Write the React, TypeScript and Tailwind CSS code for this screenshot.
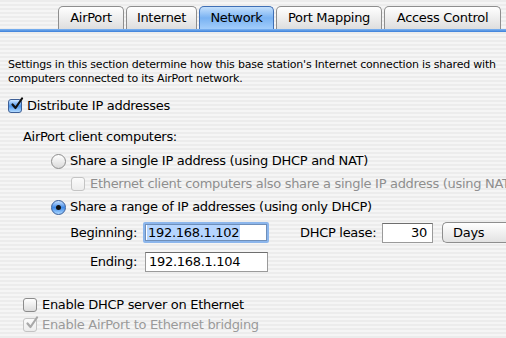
import React from "react";

type TabProps = { label: string; width: string; selected?: boolean };

const Tab = ({ label, width, selected }: TabProps) => (
  <div
    className={
      "h-[23px] flex items-center justify-center rounded-t-[5px] border border-b-0 text-[13px] tracking-[-0.3px] " +
      width +
      (selected
        ? " border-[#3f6fb5] bg-gradient-to-b from-[#c4e0fc] via-[#79b2f2] to-[#a2cdfb]"
        : " border-[#8e8e8e] bg-gradient-to-b from-[#ffffff] to-[#dedede]")
    }
  >
    {label}
  </div>
);

const CheckMark = ({ color }: { color: string }) => (
  <svg
    viewBox="0 0 14 14"
    className="absolute left-[1px] top-[-3px] w-[14px] h-[14px]"
  >
    <path
      d="M2.5 7.5 L5.5 11 L12 1.5"
      fill="none"
      stroke={color}
      strokeWidth="2.2"
      strokeLinecap="round"
      strokeLinejoin="round"
    />
  </svg>
);

const Checkbox = ({
  checked,
  disabled,
}: {
  checked?: boolean;
  disabled?: boolean;
}) => {
  let cls = "relative w-[14px] h-[14px] rounded-[3px] border shrink-0 ";
  if (checked && !disabled) {
    cls +=
      "border-[#3d5f96] bg-gradient-to-b from-[#d2e8ff] via-[#4c95ea] to-[#b3dbff]";
  } else if (disabled) {
    cls += "border-[#c4c4c4] bg-gradient-to-b from-[#fbfbfb] to-[#ececec]";
  } else {
    cls += "border-[#8c8c8c] bg-gradient-to-b from-[#ffffff] to-[#dcdcdc]";
  }
  return (
    <div className={cls}>
      {checked && <CheckMark color={disabled ? "#a8a8a8" : "#111111"} />}
    </div>
  );
};

const Radio = ({ selected }: { selected?: boolean }) => (
  <div
    className={
      "w-[15px] h-[15px] rounded-full border shrink-0 flex items-center justify-center " +
      (selected
        ? "border-[#355c9a] bg-gradient-to-b from-[#c8e2ff] via-[#3e89e6] to-[#a9d6ff]"
        : "border-[#8c8c8c] bg-gradient-to-b from-[#ffffff] to-[#d9d9d9]")
    }
  >
    {selected && <div className="w-[5px] h-[5px] rounded-full bg-[#111]" />}
  </div>
);

export default function App() {
  return (
    <div className="w-[506px] h-[338px] overflow-hidden font-['DejaVu_Sans',sans-serif] text-black bg-[image:repeating-linear-gradient(to_bottom,#ececec_0px,#ececec_2px,#f5f5f5_2px,#f5f5f5_4px)]">
      {/* tabs */}
      <div className="flex items-end pt-[6px] pl-[58px] gap-[2px] h-[29px]">
        <Tab label="AirPort" width="w-[66px]" />
        <Tab label="Internet" width="w-[71px]" />
        <Tab label="Network" width="w-[75px]" selected />
        <Tab label="Port Mapping" width="w-[106px]" />
        <Tab label="Access Control" width="w-[117px]" />
      </div>
      <div className="h-[3px] bg-gradient-to-b from-[#7fb5f2] to-[#3c7fd9]" />

      <p className="mt-[26px] pl-[8px] w-[500px] text-[11px] leading-[14px] tracking-[-0.2px]">
        Settings in this section determine how this base station's Internet
        connection is shared with computers connected to its AirPort network.
      </p>

      <div className="text-[13px] tracking-[-0.3px] whitespace-nowrap">
        <div className="mt-[11px] h-[18px] flex items-center pl-[8px] gap-[5px]">
          <Checkbox checked />
          <span>Distribute IP addresses</span>
        </div>

        <div className="mt-[13px] h-[18px] flex items-center pl-[23px]">
          AirPort client computers:
        </div>

        <div className="mt-[6px] h-[18px] flex items-center pl-[51px] gap-[4px]">
          <Radio />
          <span>Share a single IP address (using DHCP and NAT)</span>
        </div>

        <div className="mt-[5px] h-[18px] flex items-center pl-[71px] gap-[5px]">
          <Checkbox disabled />
          <span className="text-[#8e8e8e]">
            Ethernet client computers also share a single IP address (using
            NAT)
          </span>
        </div>

        <div className="mt-[5px] h-[18px] flex items-center pl-[51px] gap-[4px]">
          <Radio selected />
          <span>Share a range of IP addresses (using only DHCP)</span>
        </div>

        <div className="mt-[6px] h-[21px] flex items-center">
          <div className="w-[137px] shrink-0 text-right">Beginning:</div>
          <div className="ml-[6px] w-[126px] h-[21px] shrink-0 rounded-[2px] border-[2px] border-[#8cb6ec] bg-white flex items-center">
            <div className="w-full h-full border border-[#6f8fb9] flex items-center pl-[1px]">
              <span className="bg-[#b5d5ff] px-[1px] leading-[15px]">
                192.168.1.102
              </span>
            </div>
          </div>
          <div className="ml-[31px] w-[76px] shrink-0">DHCP lease:</div>
          <div className="ml-[6px] w-[51px] h-[20px] shrink-0 border border-[#9a9a9a] border-t-[#6e6e6e] bg-white flex items-center justify-end pr-[5px]">
            30
          </div>
          <div className="ml-[9px] w-[90px] h-[21px] shrink-0 rounded-l-[5px] border border-r-0 border-[#8e8e8e] bg-gradient-to-b from-[#ffffff] to-[#e2e2e2] flex items-center pl-[10px]">
            Days
          </div>
        </div>

        <div className="mt-[9px] h-[20px] flex items-center">
          <div className="w-[137px] shrink-0 text-right">Ending:</div>
          <div className="ml-[8px] w-[123px] h-[20px] shrink-0 border border-[#9a9a9a] border-t-[#6e6e6e] bg-white flex items-center pl-[3px]">
            192.168.1.104
          </div>
        </div>

        <div className="mt-[24px] h-[18px] flex items-center pl-[23px] gap-[5px]">
          <Checkbox />
          <span>Enable DHCP server on Ethernet</span>
        </div>

        <div className="mt-[2px] h-[18px] flex items-center pl-[23px] gap-[5px]">
          <Checkbox checked disabled />
          <span className="text-[#9a9a9a]">
            Enable AirPort to Ethernet bridging
          </span>
        </div>
      </div>
    </div>
  );
}
